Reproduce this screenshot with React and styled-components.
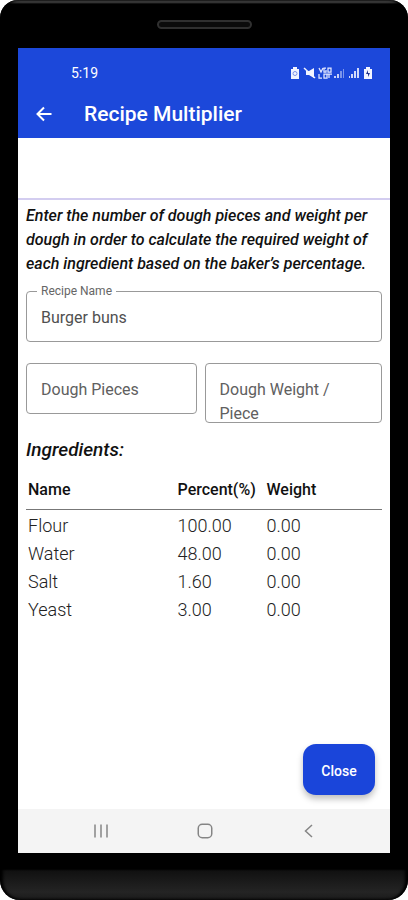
import React, { useState } from "react";
import styled, { createGlobalStyle } from "styled-components";

const GlobalStyle = createGlobalStyle`
  *, *::before, *::after { box-sizing: border-box; }
  body { margin: 0; background: #fff; font-family: Roboto, sans-serif; color: #111; }
  button, input, textarea { font: inherit; color: inherit; }
`;

const Phone = styled.div`
  display: flex;
  flex-direction: column;
  min-height: 100vh;
  padding: 0 18px;
  border-radius: 18px 18px 20px 20px;
  background: linear-gradient(#484848 0 2px, #000 4px calc(100% - 31px), #111 calc(100% - 29px), #242424 calc(100% - 8px), #1a1a1a);
  box-shadow: inset 3px 0 3px #000, inset -3px 0 3px #000;
`;

const SpeakerArea = styled.div`
  display: flex;
  justify-content: center;
  height: 48px;
  padding-top: 20px;
`;

const Speaker = styled.div`
  width: 95px;
  height: 9px;
  border: 2px solid #303030;
  border-radius: 5px;
  background: #0b0b0b;
`;

const Chin = styled.div`
  height: 47px;
`;

const Screen = styled.div`
  flex: 1;
  display: flex;
  flex-direction: column;
  background: #fff;
`;

const Header = styled.header`
  background: #1c48da;
  color: #fff;
`;

const StatusBar = styled.div`
  display: flex;
  align-items: center;
  justify-content: space-between;
  height: 48px;
  padding: 2px 17px 0 53px;
  font-size: 14px;
`;

const AppBar = styled.div`
  display: flex;
  align-items: center;
  gap: 28px;
  height: 42px;
  padding: 0 14px 6px;
`;

const IconButton = styled.button`
  display: flex;
  align-items: center;
  justify-content: center;
  width: 24px;
  height: 24px;
  padding: 0;
  border: 0;
  background: none;
  color: inherit;
`;

const Title = styled.h1`
  margin: 0;
  font-size: 21px;
  line-height: 24px;
  font-weight: 500;
`;

const TabStrip = styled.div`
  height: 62px;
  border-bottom: 2px solid #d3cdf0;
`;

const Content = styled.main`
  flex: 1;
  display: flex;
  flex-direction: column;
  padding: 4px 8px 14px;
`;

const Intro = styled.p`
  margin: 0;
  font-size: 16px;
  line-height: 24px;
  font-style: italic;
  font-weight: 500;
`;

const NameField = styled.fieldset`
  min-width: 0;
  height: 57px;
  margin: 9px 0 0;
  padding: 0 10px;
  border: 1px solid #999;
  border-radius: 4px;
`;

const Legend = styled.legend`
  padding: 0 4px;
  font-size: 12px;
  line-height: 12px;
  color: #666;
`;

const NameInput = styled.input`
  display: block;
  width: 100%;
  height: 40px;
  padding: 0 4px;
  border: 0;
  outline: 0;
  background: none;
  font-size: 16px;
  color: #505050;
`;

const FieldRow = styled.div`
  display: grid;
  grid-template-columns: 171fr 178fr;
  align-items: start;
  gap: 8px;
  margin-top: 21px;
`;

const Field = styled.div`
  display: grid;
  height: ${({ $tall }) => ($tall ? 60 : 51)}px;
  border: 1px solid #999;
  border-radius: 4px;
  overflow: hidden;
  font-size: 16px;
  line-height: 24px;
  color: #606060;

  > * { grid-area: 1 / 1; }
`;

const FieldLabel = styled.label`
  padding: 14px 24px 0 14px;
  pointer-events: none;
  visibility: ${({ $hidden }) => ($hidden ? "hidden" : "visible")};
`;

const FieldInput = styled.input`
  width: 100%;
  height: 49px;
  padding: 0 14px;
  border: 0;
  outline: 0;
  background: none;
`;

const SectionTitle = styled.h2`
  margin: 15px 0 0;
  font-size: 19px;
  line-height: 24px;
  font-style: italic;
  font-weight: 500;
`;

const Table = styled.table`
  width: 100%;
  margin-top: 8px;
  border-collapse: collapse;
  table-layout: fixed;
  text-align: left;
`;

const HeadCell = styled.th`
  width: ${({ $width }) => $width};
  height: 39px;
  padding: 1px 1px 0 2px;
  border-bottom: 1px solid #777;
  font-size: 16px;
  font-weight: 500;
`;

const Cell = styled.td`
  height: 28px;
  padding: 4px 2px 0;
  font-size: 18px;
  line-height: 24px;
  font-weight: 300;
  color: #222;
`;

const CloseButton = styled.button`
  align-self: flex-end;
  width: 72px;
  height: 51px;
  margin: auto 7px 0 0;
  padding: 2px 0 0;
  border: 0;
  border-radius: 13px;
  background: #1a45da;
  color: #fff;
  font-size: 14px;
  font-weight: 500;
  box-shadow: 0 4px 6px rgba(0, 0, 0, 0.25);
`;

const NavBar = styled.nav`
  display: flex;
  align-items: center;
  justify-content: space-between;
  height: 44px;
  padding: 0 69px 0 71px;
  background: #f4f4f4;
  color: #858585;
`;

const StatusIcons = () => (
  <svg width="84" height="14" viewBox="0 0 84 14" fill="#f2f4ff" aria-hidden="true">
    <path d="M4 1h4v2h2v10H2V3h2z" />
    <circle cx="6" cy="7.5" r="2" fill="none" stroke="#7d93ea" />
    <path d="M17 5h3l5-3v10l-5-3h-3z" />
    <path d="M15 2l11 10" stroke="#f2f4ff" strokeWidth="1.500" />
    <g fill="none" stroke="#e3e7ff" strokeWidth="1.250">
      <path d="M30 2l2 4 2-4M37 2h-2v4h2v-2M39 2v4h3V2zM30 8v4h3M35 8h3v4h-3zM40 8v4M38 8h5" />
    </g>
    <path d="M45 10h2v2h-2zM48 8h2v4h-2z" opacity=".8" />
    <path d="M51 5h2v7h-2zM54 3h1v9h-1z" opacity=".45" />
    <path d="M60 10h1v2h-1zM62 8h2v4h-2zM65 5h2v7h-2zM68 2h2v10h-2z" opacity=".85" />
    <path d="M77 1h4v2h2v10h-8V3h2z" />
    <path d="M79 4l-2 4h2v3l2-4h-2z" fill="#20318a" />
  </svg>
);

const BackArrow = () => (
  <svg width="16" height="16" viewBox="0 0 16 16" fill="none" stroke="currentColor" strokeWidth="2">
    <path d="M15.500 8H2M8 1.500L1.500 8L8 14.500" />
  </svg>
);

const RecentsIcon = () => (
  <svg width="16" height="16" viewBox="0 0 16 16" stroke="currentColor" strokeWidth="1.500">
    <path d="M2 1.500v13M8 1.500v13M14 1.500v13" />
  </svg>
);

const HomeIcon = () => (
  <svg width="16" height="16" viewBox="0 0 16 16" fill="none" stroke="currentColor" strokeWidth="1.500">
    <rect x="1.250" y="1.250" width="13.500" height="13.500" rx="4" />
  </svg>
);

const NavBackIcon = () => (
  <svg width="16" height="16" viewBox="0 0 16 16" fill="none" stroke="currentColor" strokeWidth="1.500">
    <path d="M11 2L4.500 8l6.500 6" />
  </svg>
);

const ingredients = [
  { name: "Flour", percent: 100 },
  { name: "Water", percent: 48 },
  { name: "Salt", percent: 1.6 },
  { name: "Yeast", percent: 3 },
];

function OutlinedField({ id, label, tall }) {
  const [value, setValue] = useState("");
  return (
    <Field $tall={tall}>
      <FieldLabel htmlFor={id} $hidden={value !== ""}>{label}</FieldLabel>
      <FieldInput id={id} inputMode="decimal" value={value} onChange={(e) => setValue(e.target.value)} />
    </Field>
  );
}

export default function App() {
  return (
    <Phone>
      <GlobalStyle />
      <SpeakerArea><Speaker /></SpeakerArea>
      <Screen>
        <Header>
          <StatusBar><span>5:19</span><StatusIcons /></StatusBar>
          <AppBar>
            <IconButton aria-label="Back"><BackArrow /></IconButton>
            <Title>Recipe Multiplier</Title>
          </AppBar>
        </Header>
        <TabStrip />
        <Content>
          <Intro>
            Enter the number of dough pieces and weight per dough in order to calculate the required
            weight of each ingredient based on the baker’s percentage.
          </Intro>
          <NameField>
            <Legend><label htmlFor="recipe">Recipe Name</label></Legend>
            <NameInput id="recipe" defaultValue="Burger buns" />
          </NameField>
          <FieldRow>
            <OutlinedField id="pieces" label="Dough Pieces" />
            <OutlinedField id="weight" label="Dough Weight / Piece" tall />
          </FieldRow>
          <SectionTitle>Ingredients:</SectionTitle>
          <Table>
            <thead>
              <tr>
                <HeadCell $width="42%">Name</HeadCell>
                <HeadCell $width="25%">Percent(%)</HeadCell>
                <HeadCell $width="33%">Weight</HeadCell>
              </tr>
            </thead>
            <tbody>
              {ingredients.map(({ name, percent }) => (
                <tr key={name}>
                  <Cell>{name}</Cell>
                  <Cell>{percent.toFixed(2)}</Cell>
                  <Cell>0.00</Cell>
                </tr>
              ))}
            </tbody>
          </Table>
          <CloseButton>Close</CloseButton>
        </Content>
        <NavBar aria-label="System">
          <IconButton aria-label="Recent apps"><RecentsIcon /></IconButton>
          <IconButton aria-label="Home"><HomeIcon /></IconButton>
          <IconButton aria-label="Go back"><NavBackIcon /></IconButton>
        </NavBar>
      </Screen>
      <Chin />
    </Phone>
  );
}
